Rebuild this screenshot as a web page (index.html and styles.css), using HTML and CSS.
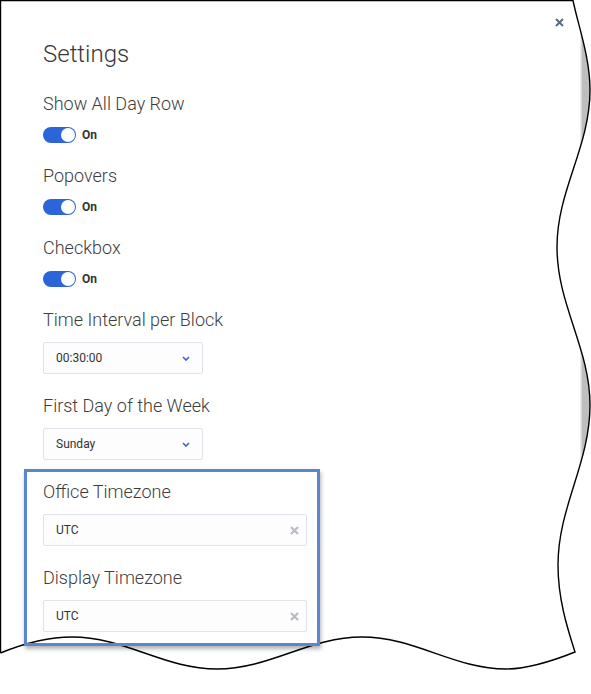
FILE: index.html
```html
<!DOCTYPE HTML>
<html lang=en>
	<head>
		<meta charset="UTF-8">
		<link rel="stylesheet" href="styles.css">
	</head>
	<body>
		<div class="dialog">
			<div class="dialog-head">
				<h2 class="dialog-title">Settings</h2>
				<button class="close" aria-label="Close">
					<svg width="9" height="9" viewBox="0 0 9 9"><path d="M1 1L8 8M8 1L1 8" stroke="#5a6b82" stroke-width="2"/></svg>
				</button>
			</div>

			<div class="field">
				<div class="field-label">Show All Day Row</div>
				<div class="switch-row"><span class="switch"></span><span class="switch-text">On</span></div>
			</div>
			<div class="field">
				<div class="field-label">Popovers</div>
				<div class="switch-row"><span class="switch"></span><span class="switch-text">On</span></div>
			</div>
			<div class="field">
				<div class="field-label">Checkbox</div>
				<div class="switch-row"><span class="switch"></span><span class="switch-text">On</span></div>
			</div>

			<div class="field">
				<div class="field-label">Time Interval per Block</div>
				<div class="select">
					<span>00:30:00</span>
					<svg class="chevron" width="8" height="5" viewBox="0 0 8 5"><path d="M1 1L4 4L7 1" fill="none" stroke="#3b63cf" stroke-width="1.6"/></svg>
				</div>
			</div>
			<div class="field">
				<div class="field-label">First Day of the Week</div>
				<div class="select">
					<span>Sunday</span>
					<svg class="chevron" width="8" height="5" viewBox="0 0 8 5"><path d="M1 1L4 4L7 1" fill="none" stroke="#3b63cf" stroke-width="1.6"/></svg>
				</div>
			</div>

			<div class="field">
				<div class="field-label">Office Timezone</div>
				<div class="select select-wide">
					<span>UTC</span>
					<svg class="clear" width="9" height="9" viewBox="0 0 9 9"><path d="M1 1L8 8M8 1L1 8" stroke="#b8bcc5" stroke-width="2.2"/></svg>
				</div>
			</div>
			<div class="field">
				<div class="field-label">Display Timezone</div>
				<div class="select select-wide">
					<span>UTC</span>
					<svg class="clear" width="9" height="9" viewBox="0 0 9 9"><path d="M1 1L8 8M8 1L1 8" stroke="#b8bcc5" stroke-width="2.2"/></svg>
				</div>
			</div>
		</div>

		<!-- torn screenshot edge -->
		<svg class="torn-edge" width="591" height="694" viewBox="0 0 591 694">
			<defs>
				<clipPath id="paper">
					<path d="M0 0L573 0C578 25 590 57 590 90C590 147 557 190 557 247C557 305 590 348 590 405C590 463 558 507 558 565C558 600 568 630 575 652C555 660 530 669 506 669C454 669 415 637 362 637C309 637 270 669 217 669C164 669 125 637 72 637C46 637 20 645 0 653Z"/>
				</clipPath>
			</defs>
			<g clip-path="url(#paper)">
				<rect x="580" y="0" width="1.5" height="694" fill="#ebebeb"/>
				<rect x="581.5" y="0" width="10" height="694" fill="#bebebe"/>
			</g>
			<path d="M0.5 653L0.5 0.5L573 0.5C578 25 590 57 590 90C590 147 557 190 557 247C557 305 590 348 590 405C590 463 558 507 558 565C558 600 568 630 575 652C555 660 530 669 506 669C454 669 415 637 362 637C309 637 270 669 217 669C164 669 125 637 72 637C46 637 20 645 0.5 653" fill="none" stroke="#000" stroke-width="1.4"/>
		</svg>

		<div class="highlight"></div>
	</body>
</html>
```

FILE: styles.css
```css
html {
	font-family: Roboto, "Liberation Sans", sans-serif;
	color: #3a3a3a;
}
body {
	margin: 0;
	background: #fff;
}

.dialog {
	width: 591px;
	height: 694px;
	box-sizing: border-box;
	padding: 18px 0 0 43px;
}
.dialog-head {
	display: flex;
	justify-content: space-between;
	align-items: flex-start;
	margin-bottom: 22px;
}
.dialog-title {
	margin: 20px 0 0;
	font-size: 24px;
	font-weight: 300;
	line-height: 32px;
	color: #383838;
}
.close {
	margin: 0 27px 0 0;
	padding: 0;
	border: none;
	background: none;
	width: 9px;
	height: 9px;
	display: flex;
}

.field { margin-bottom: 20px; }
.field-label {
	font-size: 18px;
	font-weight: 300;
	line-height: 24px;
	margin-bottom: 10px;
	color: #3d3d3d;
}

/* toggles */
.switch-row {
	display: flex;
	align-items: center;
	height: 18px;
}
.switch {
	position: relative;
	width: 33px;
	height: 16px;
	border-radius: 8px;
	background: #2c64da;
}
.switch::after {
	content: "";
	position: absolute;
	top: 1px;
	right: 1px;
	width: 14px;
	height: 14px;
	border-radius: 50%;
	background: #fff;
}
.switch-text {
	margin-left: 6px;
	font-size: 12px;
	font-weight: 700;
	color: #333;
}

/* select-like boxes */
.select {
	display: flex;
	align-items: center;
	justify-content: space-between;
	width: 160px;
	height: 32px;
	box-sizing: border-box;
	padding: 0 12px 0 12px;
	border: 1px solid #dfe3ea;
	border-radius: 2px;
	background: #fdfdfe;
	font-size: 12px;
	color: #333;
}
.select-wide {
	width: 264px;
	padding-right: 7px;
}
.chevron { margin-top: 1px; }

.torn-edge {
	position: absolute;
	top: 0;
	left: 0;
	pointer-events: none;
}

.highlight {
	position: absolute;
	left: 24px;
	top: 469px;
	width: 296px;
	height: 177px;
	box-sizing: border-box;
	border: 3px solid #5a86cb;
	box-shadow: 1px 3px 4px rgba(0,0,0,0.3);
	pointer-events: none;
}
```
